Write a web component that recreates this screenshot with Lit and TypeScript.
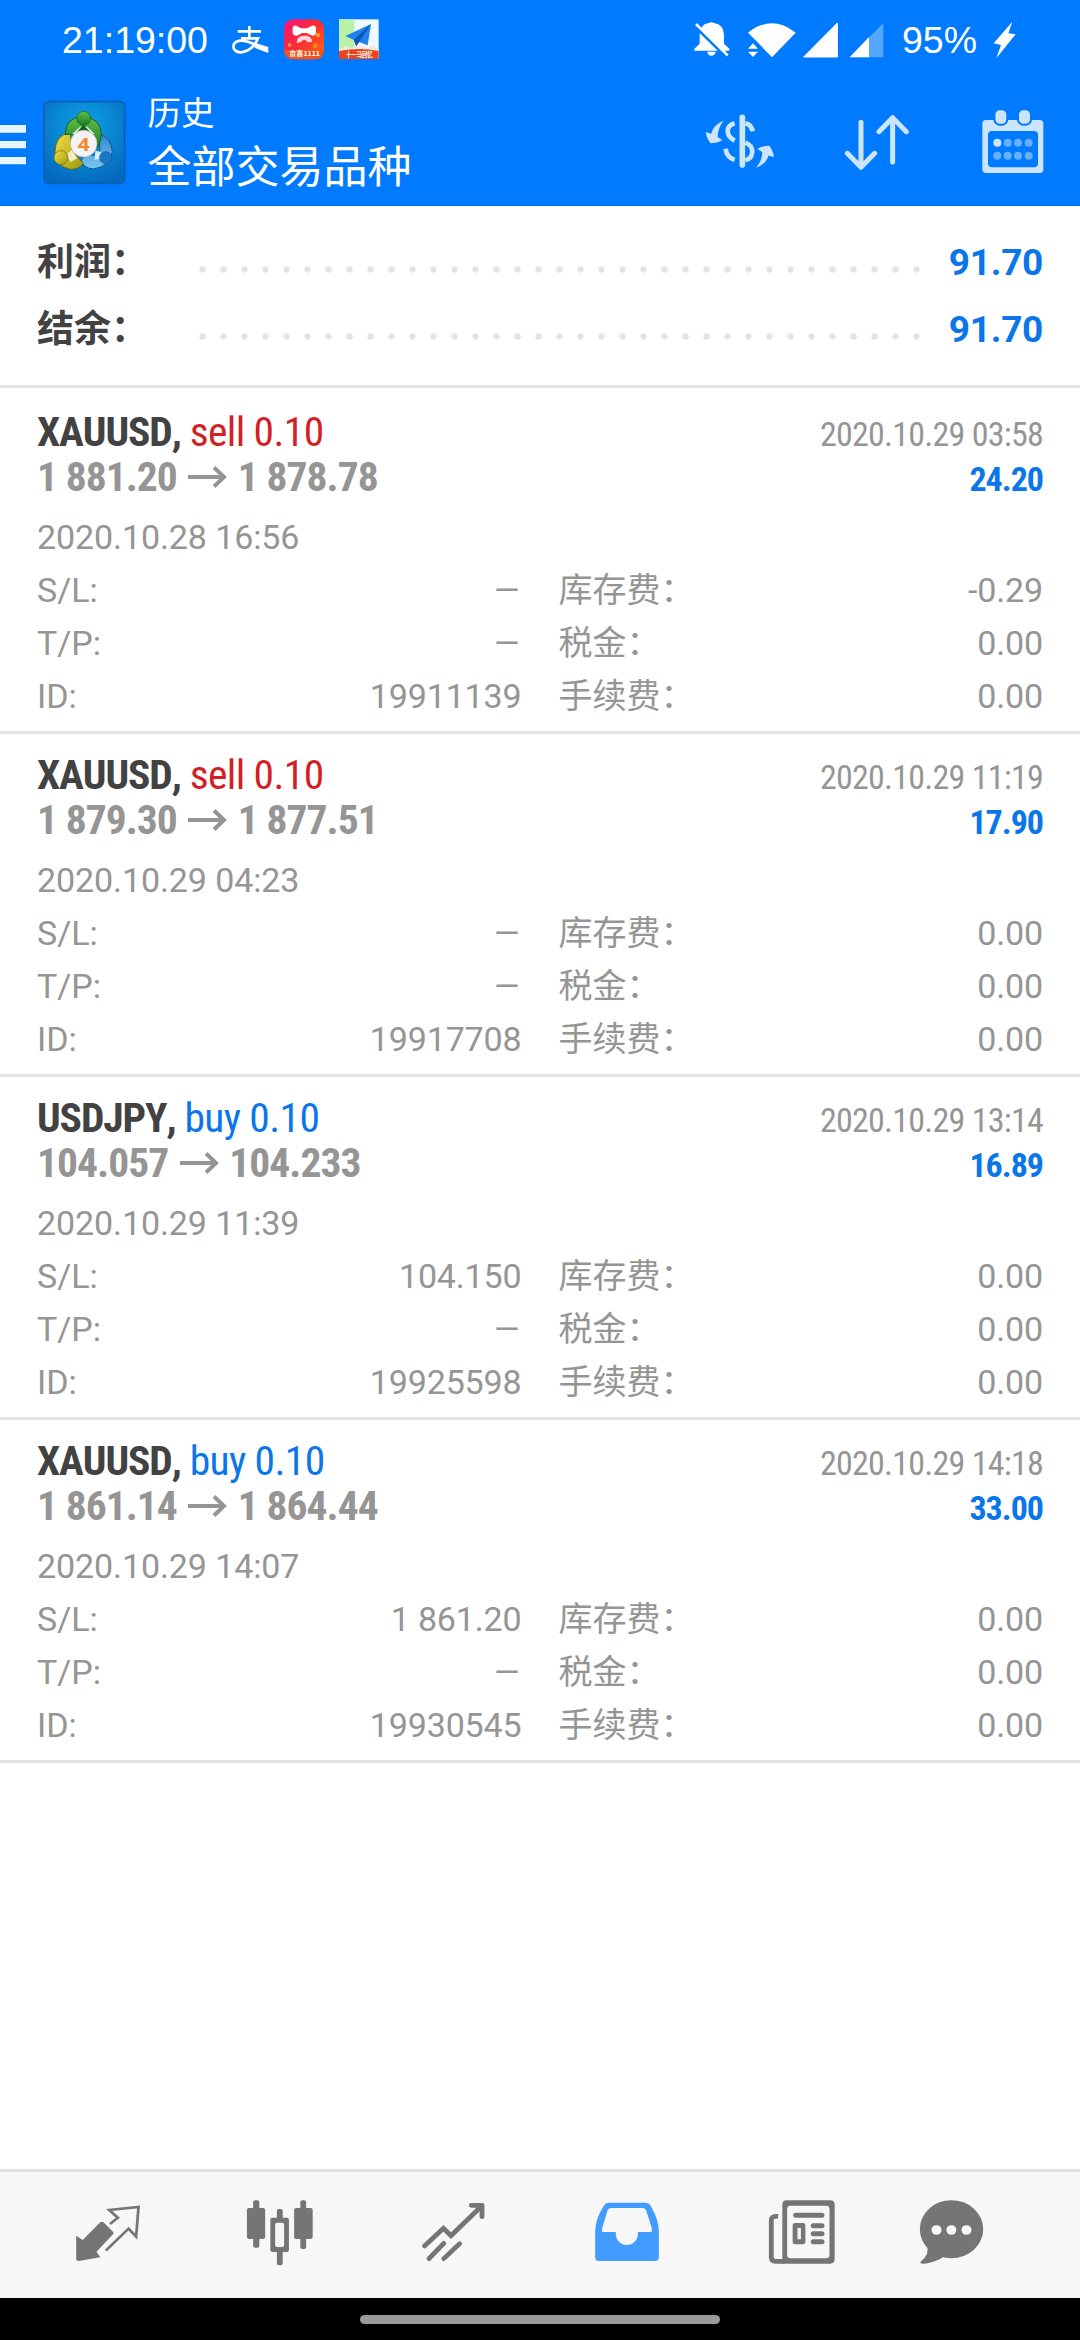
import { LitElement, html, css, svg, type TemplateResult } from "lit";
import { customElement, property } from "lit/decorators.js";

interface Deal {
  symbol: string;
  side: "sell" | "buy";
  volume: string;
  open: string;
  close: string;
  closeTime: string;
  openTime: string;
  profit: string;
  sl: string;
  tp: string;
  id: string;
  swap: string;
  tax: string;
  fee: string;
}

const DEALS: Deal[] = [
  { symbol: "XAUUSD", side: "sell", volume: "0.10", open: "1 881.20", close: "1 878.78", closeTime: "2020.10.29 03:58", openTime: "2020.10.28 16:56", profit: "24.20", sl: "–", tp: "–", id: "19911139", swap: "-0.29", tax: "0.00", fee: "0.00" },
  { symbol: "XAUUSD", side: "sell", volume: "0.10", open: "1 879.30", close: "1 877.51", closeTime: "2020.10.29 11:19", openTime: "2020.10.29 04:23", profit: "17.90", sl: "–", tp: "–", id: "19917708", swap: "0.00", tax: "0.00", fee: "0.00" },
  { symbol: "USDJPY", side: "buy", volume: "0.10", open: "104.057", close: "104.233", closeTime: "2020.10.29 13:14", openTime: "2020.10.29 11:39", profit: "16.89", sl: "104.150", tp: "–", id: "19925598", swap: "0.00", tax: "0.00", fee: "0.00" },
  { symbol: "XAUUSD", side: "buy", volume: "0.10", open: "1 861.14", close: "1 864.44", closeTime: "2020.10.29 14:18", openTime: "2020.10.29 14:07", profit: "33.00", sl: "1 861.20", tp: "–", id: "19930545", swap: "0.00", tax: "0.00", fee: "0.00" },
];

@customElement("status-bar")
class StatusBar extends LitElement {
  static styles = css`
    :host { display: flex; align-items: center; height: 80px; padding: 0 64px 0 62px; color: #fff; }
    .clock, .battery { font: 400 37.5px/53px "Liberation Sans", Arial, sans-serif; white-space: nowrap; }
    .clock { width: 169.7px; }
    .battery { width: 91px; }
    svg { display: block; height: 53.33px; flex: none; }
    .pay { width: 37px; margin-right: 15.3px; }
    .shop { width: 40px; margin-right: 15px; }
    .plane { width: 40px; }
    .spacer { flex: 1; }
    .bell { width: 36px; margin-right: 18px; }
    .wifi { width: 48px; margin-right: 7px; }
    .signal { width: 35px; margin-right: 11px; }
    .signal-two { width: 35px; margin-right: 18.3px; }
    .bolt { width: 23px; }
    .tiny { font: 700 19px "Noto Sans CJK SC", sans-serif; }
  `;

  render() {
    return html`
      <span class="clock">21:19:00</span>
      <svg class="pay" viewBox="695 40 111 160" fill="none" stroke="#fff" stroke-width="8">
        <path d="M712 95H782M747 79V117M722 116H773Q763 141 742 152Q712 166 701 148Q694 128 718 123Q744 122 790 147" />
        <path d="M768 131L804 142V160L762 144Z" fill="#fff" stroke="none" />
      </svg>
      <svg class="shop" viewBox="851 40 120 160">
        <defs><linearGradient id="g" x1="0" y1="0" x2="1" y2="1"><stop offset="0" stop-color="#fb0f7c" /><stop offset=".5" stop-color="#f72f30" /><stop offset="1" stop-color="#ff6a12" /></linearGradient></defs>
        <rect x="851" y="59" width="120" height="120" rx="27" fill="url(#g)" />
        <path d="M852 151H970Q969 179 944 179H878Q853 179 852 151Z" fill="#f0541c" />
        <path d="M877 84Q878 76 888 78L902 86H920L935 78Q946 76 947 85V101Q945 109 936 108L919 100H905L890 108Q879 110 877 101Z" fill="#fff" />
        <path d="M905 108Q888 113 889 130L901 128Q912 113 922 128L936 126Q934 112 919 108Z" fill="#ffd3dc" />
        <circle cx="953" cy="106" r="7" fill="#ff9820" /><circle cx="945" cy="138" r="8" fill="#ff7f1c" /><circle cx="868" cy="136" r="6" fill="#ff8f3a" />
        <text class="tiny" x="867" y="170" fill="#fff" textLength="92" lengthAdjust="spacingAndGlyphs">京喜1111</text>
      </svg>
      <svg class="plane" viewBox="1016 40 120 160">
        <rect x="1016" y="59" width="119" height="119" fill="#eef8ff" />
        <path d="M1016 59H1062V150H1016Z" fill="#b9f2a6" />
        <path d="M1016 152L1034 138L1050 146L1075 136L1098 146L1118 136L1135 150V178H1016Z" fill="#f3e9e4" />
        <path d="M1035 109L1112 73L1102 137L1076 127L1068 140L1060 120Z" fill="#1f80ee" />
        <path d="M1060 120L1112 73L1068 140Z" fill="#0b57b8" />
        <path d="M1016 154Q1076 142 1135 154V178H1016Z" fill="#ee4318" />
        <text class="tiny" x="1037" y="172" fill="#fff" textLength="80" lengthAdjust="spacingAndGlyphs">十一马回忆</text>
      </svg>
      <span class="spacer"></span>
      <svg class="bell" viewBox="100 40 108 160" fill="#fff">
        <path d="M101 153V147L117 132V106Q118 72 145 70Q152 66 160 70Q189 74 190 106V132L206 147V153Z" />
        <path d="M140 156H165Q163 168 152 168Q142 168 140 156Z" />
        <path d="M101 78L199 174" stroke="#007aff" stroke-width="9" />
        <path d="M106 73L201 167" stroke="#fff" stroke-width="8" />
      </svg>
      <svg class="wifi" viewBox="263 40 144 160" fill="#fff">
        <path d="M263 99Q334 43 406 99L335 173L288 124Z" />
        <path d="M259 152L278 128L297 152Z" fill="#007aff" />
        <path d="M263 147L278 131L293 147ZM263 156H293L278 172Z" />
      </svg>
      <svg class="signal" viewBox="426 40 105 160"><path d="M428 172L529 70V172Z" fill="#fff" stroke="#fff" stroke-width="3" stroke-linejoin="round" /></svg>
      <svg class="signal-two" viewBox="564 40 105 160">
        <path d="M566 173L667 70V173Z" fill="#55a6ff" />
        <path d="M566 173L624 112V173Z" fill="#fff" />
      </svg>
      <span class="battery">95%</span>
      <svg class="bolt" viewBox="999 40 69 160"><path d="M1057 66L1001 131L1023 136L1009 176L1067 104L1045 101Z" fill="#fff" /></svg>
    `;
  }
}

@customElement("nav-bar")
class NavBar extends LitElement {
  static styles = css`
    :host { display: flex; align-items: flex-start; box-sizing: border-box; height: 126px; padding: 12px 36.5px 0 0; border-bottom: 1px solid #0070dc; color: #fff; }
    svg { display: block; flex: none; height: 86.67px; margin-top: 8px; }
    .menu { width: 26px; margin-right: 17px; }
    .logo { width: 82.67px; margin-right: 21.8px; }
    .titles { flex: 1; font-family: Roboto, "Noto Sans CJK SC", sans-serif; font-weight: 400; }
    .section { font-size: 33.5px; line-height: 44px; height: 46px; }
    .filter { font-size: 44px; line-height: 60px; }
    .money { width: 69.3px; margin-right: 69px; }
    .sort { width: 65.3px; margin-right: 72.7px; }
    .calendar { width: 62px; }
    .digit { font: 700 56px Roboto, sans-serif; }
  `;

  render() {
    return html`
      <svg class="menu" viewBox="0 300 78 260" fill="#e6f6ff"><path d="M0 375H78V398H0ZM0 423H78V445H0ZM0 471H78V493H0Z" /></svg>
      <svg class="logo" viewBox="129 300 248 260">
        <defs>
          <radialGradient id="bg" cx=".5" cy=".3" r=".75"><stop offset="0" stop-color="#0fa3e6" /><stop offset="1" stop-color="#0468bd" /></radialGradient>
          <linearGradient id="gr" x1="0" y1="0" x2="0" y2="1"><stop offset="0" stop-color="#5fc04a" /><stop offset="1" stop-color="#1c7a2c" /></linearGradient>
          <linearGradient id="ye" x1="0" y1="0" x2="1" y2="1"><stop offset="0" stop-color="#f2de45" /><stop offset="1" stop-color="#9e9a10" /></linearGradient>
          <linearGradient id="bl" x1="0" y1="0" x2="0" y2="1"><stop offset="0" stop-color="#2f86cd" /><stop offset="1" stop-color="#7cc8f4" /></linearGradient>
        </defs>
        <rect x="132" y="305" width="242" height="245" rx="14" fill="url(#bg)" stroke="#0560b5" stroke-width="5" />
        <path d="M298 402Q334 412 337 455Q330 500 280 507Q250 505 243 480L262 462L300 470Z" fill="url(#bl)" stroke="#0a5797" stroke-width="3" />
        <path d="M211 398Q166 404 165 455Q168 500 212 508Q238 508 250 490L215 452Z" fill="url(#ye)" stroke="#6c6a0a" stroke-width="3" />
        <path d="M196 404Q196 350 250 350Q303 354 304 404Q304 424 290 446L278 400L216 402Z" fill="url(#gr)" stroke="#155f22" stroke-width="3" />
        <path d="M216 402L240 380L262 380L284 402Z" fill="#d8f3d4" />
        <path d="M226 402L250 374L276 402Z" fill="#175f22" />
        <path d="M198 465L215 450L232 474L212 486Z" fill="#eef0c0" />
        <path d="M286 452L304 456L300 476L284 480Z" fill="#d3edff" />
        <circle cx="251" cy="355" r="21" fill="url(#gr)" stroke="#155f22" stroke-width="2" />
        <circle cx="183" cy="473" r="21" fill="url(#ye)" stroke="#6c6a0a" stroke-width="2" />
        <circle cx="317" cy="473" r="18" fill="#1c76c4" stroke="#0a5797" stroke-width="2" />
        <circle cx="251" cy="431" r="40" fill="#f4f2f2" stroke="#c2b9b5" stroke-width="2" />
        <text class="digit" x="232" y="453" fill="#f08a2c" textLength="38" lengthAdjust="spacingAndGlyphs">4</text>
      </svg>
      <div class="titles">
        <div class="section">历史</div>
        <div class="filter">全部交易品种</div>
      </div>
      <svg class="money" viewBox="136 300 208 260" fill="none" stroke="#cce5ff" stroke-width="14">
        <path d="M248 352V495" stroke-width="17" stroke-linecap="round" />
        <path d="M225 370Q204 376 204 394Q205 411 225 422M198 446Q201 472 225 480" />
        <path d="M257 370Q275 373 278 392M257 428Q278 436 278 455Q277 476 257 481" />
        <path d="M272 391L285 389" stroke-width="8" />
        <path d="M192 362Q160 374 155 401L138 396Q140 414 152 430Q172 430 188 420L174 411Q174 384 192 362Z" fill="#cce5ff" stroke="none" />
        <path d="M289 504Q321 491 326 467L343 471Q341 452 329 437Q309 437 293 447L308 456Q308 482 289 504Z" fill="#cce5ff" stroke="none" />
      </svg>
      <svg class="sort" viewBox="550 300 196 260" fill="none" stroke="#cce5ff" stroke-width="15" stroke-linecap="round" stroke-linejoin="round">
        <path d="M601 367V500M560 460L601 502L642 460M696 487V356M655 395L696 353L737 395" />
      </svg>
      <svg class="calendar" viewBox="965 300 186 260">
        <path fill="#cce5ff" fill-rule="evenodd" d="M977 360H1138Q1149 360 1149 371V508Q1149 519 1138 519H977Q966 519 966 508V371Q966 360 977 360ZM995 393Q983 393 983 405V490Q983 502 995 502H1121Q1133 502 1133 490V405Q1133 393 1121 393Z" />
        <g fill="#cce5ff" stroke="#007aff" stroke-width="6"><rect x="1002" y="328" width="39" height="46" rx="16" /><rect x="1073" y="328" width="39" height="46" rx="16" /></g>
        <circle cx="1011" cy="428" r="12" fill="#cce5ff" />
        ${[[1042, 428], [1073, 428], [1105, 428], [1011, 467], [1042, 467], [1073, 467], [1105, 467]].map(
          ([x, y]) => svg`<circle cx=${x} cy=${y} r="12" fill="#66b0ff" />`
        )}
      </svg>
    `;
  }
}

@customElement("deal-row")
class DealRow extends LitElement {
  @property({ attribute: false }) deal!: Deal;

  static styles = css`
    :host { display: block; box-sizing: border-box; height: 343px; padding: 18px 37px 8px; border-bottom: 3px solid #e3e3e3; font-family: Roboto, "Noto Sans CJK SC", sans-serif; color: #959595; }
    .line { display: flex; justify-content: space-between; align-items: baseline; height: 45px; line-height: 45px; font-family: "Roboto Condensed", Roboto, sans-serif; font-kerning: none; white-space: nowrap; }
    .title { font-size: 41.5px; letter-spacing: -0.6px; }
    .symbol { font-weight: 700; color: #424242; letter-spacing: -1.1px; }
    .sell { color: #d31f26; }
    .buy { color: #0a76ea; }
    .prices { display: flex; align-items: baseline; font-size: 41.5px; font-weight: 700; letter-spacing: -0.95px; }
    .arrow { display: block; width: 39px; height: 22px; margin: 0 10.5px 0 11.5px; align-self: center; }
    .closed { font-size: 34px; letter-spacing: -0.75px; }
    .profit { font-size: 34px; font-weight: 700; color: #0a76ea; letter-spacing: -1px; }
    .opened { margin-top: 12px; font-size: 34px; line-height: 53px; letter-spacing: -0.1px; }
    .details { display: grid; grid-template-columns: 1fr 1fr; column-gap: 37px; font-size: 34px; line-height: 53px; }
    .cell { display: flex; justify-content: space-between; height: 53px; }
    .value { letter-spacing: -0.15px; }
    .none { transform: scaleX(1.27); transform-origin: right; }
  `;

  private cell(label: string, value: string): TemplateResult {
    return html`<div class="cell"><span>${label}</span><span class=${value === "–" ? "none" : "value"}>${value}</span></div>`;
  }

  render() {
    const d = this.deal;
    return html`
      <div class="line">
        <span class="title"><span class="symbol">${d.symbol},</span> <span class=${d.side}>${d.side} ${d.volume}</span></span>
        <span class="closed">${d.closeTime}</span>
      </div>
      <div class="line">
        <span class="prices">
          <span>${d.open}</span>
          <svg class="arrow" viewBox="0 0 39 22" fill="none" stroke="#959595" stroke-width="4"><path d="M0 11H36M26 1.5L36 11L26 20.5" /></svg>
          <span>${d.close}</span>
        </span>
        <span class="profit">${d.profit}</span>
      </div>
      <div class="opened">${d.openTime}</div>
      <div class="details">
        ${this.cell("S/L:", d.sl)} ${this.cell("库存费：", d.swap)}
        ${this.cell("T/P:", d.tp)} ${this.cell("税金：", d.tax)}
        ${this.cell("ID:", d.id)} ${this.cell("手续费：", d.fee)}
      </div>
    `;
  }
}

@customElement("tab-bar")
class TabBar extends LitElement {
  static styles = css`
    :host { display: flex; height: 126px; padding-left: 20px; border-top: 3px solid #e1e1e1; background: #f7f7f7; color: #757575; }
    .tab { display: flex; justify-content: center; width: 173.5px; }
    .tab:last-child { width: 128px; }
    .active { color: #429bff; }
    svg { display: block; width: 80px; height: 126px; }
  `;

  private tab(x: number, content: unknown, active = false) {
    return html`<div class="tab ${active ? "active" : ""}">
      <svg viewBox="${x} 66 232.3 378" preserveAspectRatio="none" fill="currentColor">${content}</svg>
    </div>`;
  }

  render() {
    return html`
      ${this.tab(194.3, svg`
        <path d="M221 257L240 270L291 217Q296 213 300 217L328 245Q331 249 328 253L280 305L291 322L228 333Q221 333 221 327Z" />
        <path d="M319 222L342 203L317 180L402 171L395 260L373 236L307 302" fill="none" stroke="currentColor" stroke-width="8" />`)}
      ${this.tab(697.9, svg`
        <rect x="718" y="174" width="53" height="93" rx="6" /><rect x="736" y="151" width="18" height="142" rx="6" />
        <rect x="855" y="174" width="54" height="93" rx="6" /><rect x="873" y="151" width="17" height="146" rx="6" />
        <path fill-rule="evenodd" d="M786 209Q786 203 792 203H834Q840 203 840 209V300Q840 306 834 306H792Q786 306 786 300ZM806 218Q800 218 800 224V285Q800 291 806 291H820Q826 291 826 285V224Q826 218 820 218Z" />
        <path d="M805 214V183Q805 177 811 177H816Q822 177 822 183V214ZM805 296V340Q805 346 811 346H816Q822 346 822 340V296Z" />`)}
      ${this.tab(1201.5, svg`
        <g fill="none" stroke="currentColor" stroke-width="14" stroke-linecap="round">
          <path d="M1232 288L1287 235L1309 257L1398 168M1245 326L1288 280M1288 326L1334 281" />
          <path d="M1368 166H1399V200" stroke-linejoin="round" />
        </g>`)}
      ${this.tab(137.3, svg`
        <path fill-rule="evenodd" d="M200 158H308Q317 158 322 167Q346 208 346 245V322Q346 333 335 333H172Q161 333 161 322V245Q161 208 186 167Q191 158 200 158ZM208 174Q200 174 197 181L181 236Q178 246 187 246H221V252A32 33 0 0 0 285 252V246H319Q328 246 326 236L309 181Q306 174 299 174Z" />`, true)}
      ${this.tab(641.1, svg`
        <path fill-rule="evenodd" d="M716 151H842Q855 151 855 164V328Q855 341 842 341H703V164Q703 151 716 151ZM727 167Q717 167 717 177V315Q717 325 727 325H830Q840 325 840 315V177Q840 167 830 167Z" />
        <path d="M691 199Q671 197 671 211V322Q671 334 683 334H708" fill="none" stroke="currentColor" stroke-width="14" />
        <path d="M742 196H818M793 227H818M793 251H818M793 275H818" fill="none" stroke="currentColor" stroke-width="15" stroke-linecap="round" />
        <path fill-rule="evenodd" d="M740 219H763Q770 219 770 226V276Q770 283 763 283H740Q733 283 733 276V226Q733 219 740 219ZM747 234V268H757V234Z" />`)}
      ${this.tab(1078.8, svg`
        <ellipse cx="1193.5" cy="237.5" rx="92" ry="87" />
        <path d="M1122 285Q1132 312 1103 336Q1102 342 1112 341Q1145 339 1175 318Z" />
        <circle cx="1150" cy="240" r="14.5" fill="#f7f7f7" /><circle cx="1193" cy="240" r="14.5" fill="#f7f7f7" /><circle cx="1237" cy="240" r="14.5" fill="#f7f7f7" />`)}
    `;
  }
}

@customElement("app-root")
class AppRoot extends LitElement {
  static styles = css`
    :host { display: flex; flex-direction: column; width: 1080px; height: 2340px; background: #fff; overflow: hidden; }
    .header { background: #007aff; }
    .summary { padding: 23px 37px 22px; border-bottom: 3px solid #e3e3e3; font: 500 37px/67px Roboto, "Noto Sans CJK SC", sans-serif; }
    .total { display: flex; height: 67px; }
    .label { width: 155px; font-weight: 700; color: #424242; }
    .dots { width: 735px; height: 7px; margin-top: 37px; background: radial-gradient(circle at center, #e3e3e3 2.8px, transparent 3.6px) 0 0 / 21px 7px repeat-x; }
    .amount { flex: 1; text-align: right; font-weight: 700; color: #0a76ea; letter-spacing: -0.3px; }
    .deals { flex: 1; padding-top: 3px; }
    .gesture { display: flex; align-items: flex-start; justify-content: center; height: 25px; padding-top: 17px; background: #000; }
    .pill { width: 360px; height: 9px; border-radius: 5px; background: #999; }
  `;

  render() {
    return html`
      <div class="header"><status-bar></status-bar><nav-bar></nav-bar></div>
      <div class="summary">
        ${["利润：", "结余："].map(
          (label) => html`<div class="total"><span class="label">${label}</span><span class="dots"></span><span class="amount">91.70</span></div>`
        )}
      </div>
      <div class="deals">${DEALS.map((deal) => html`<deal-row .deal=${deal}></deal-row>`)}</div>
      <tab-bar></tab-bar>
      <div class="gesture"><div class="pill"></div></div>
    `;
  }
}
